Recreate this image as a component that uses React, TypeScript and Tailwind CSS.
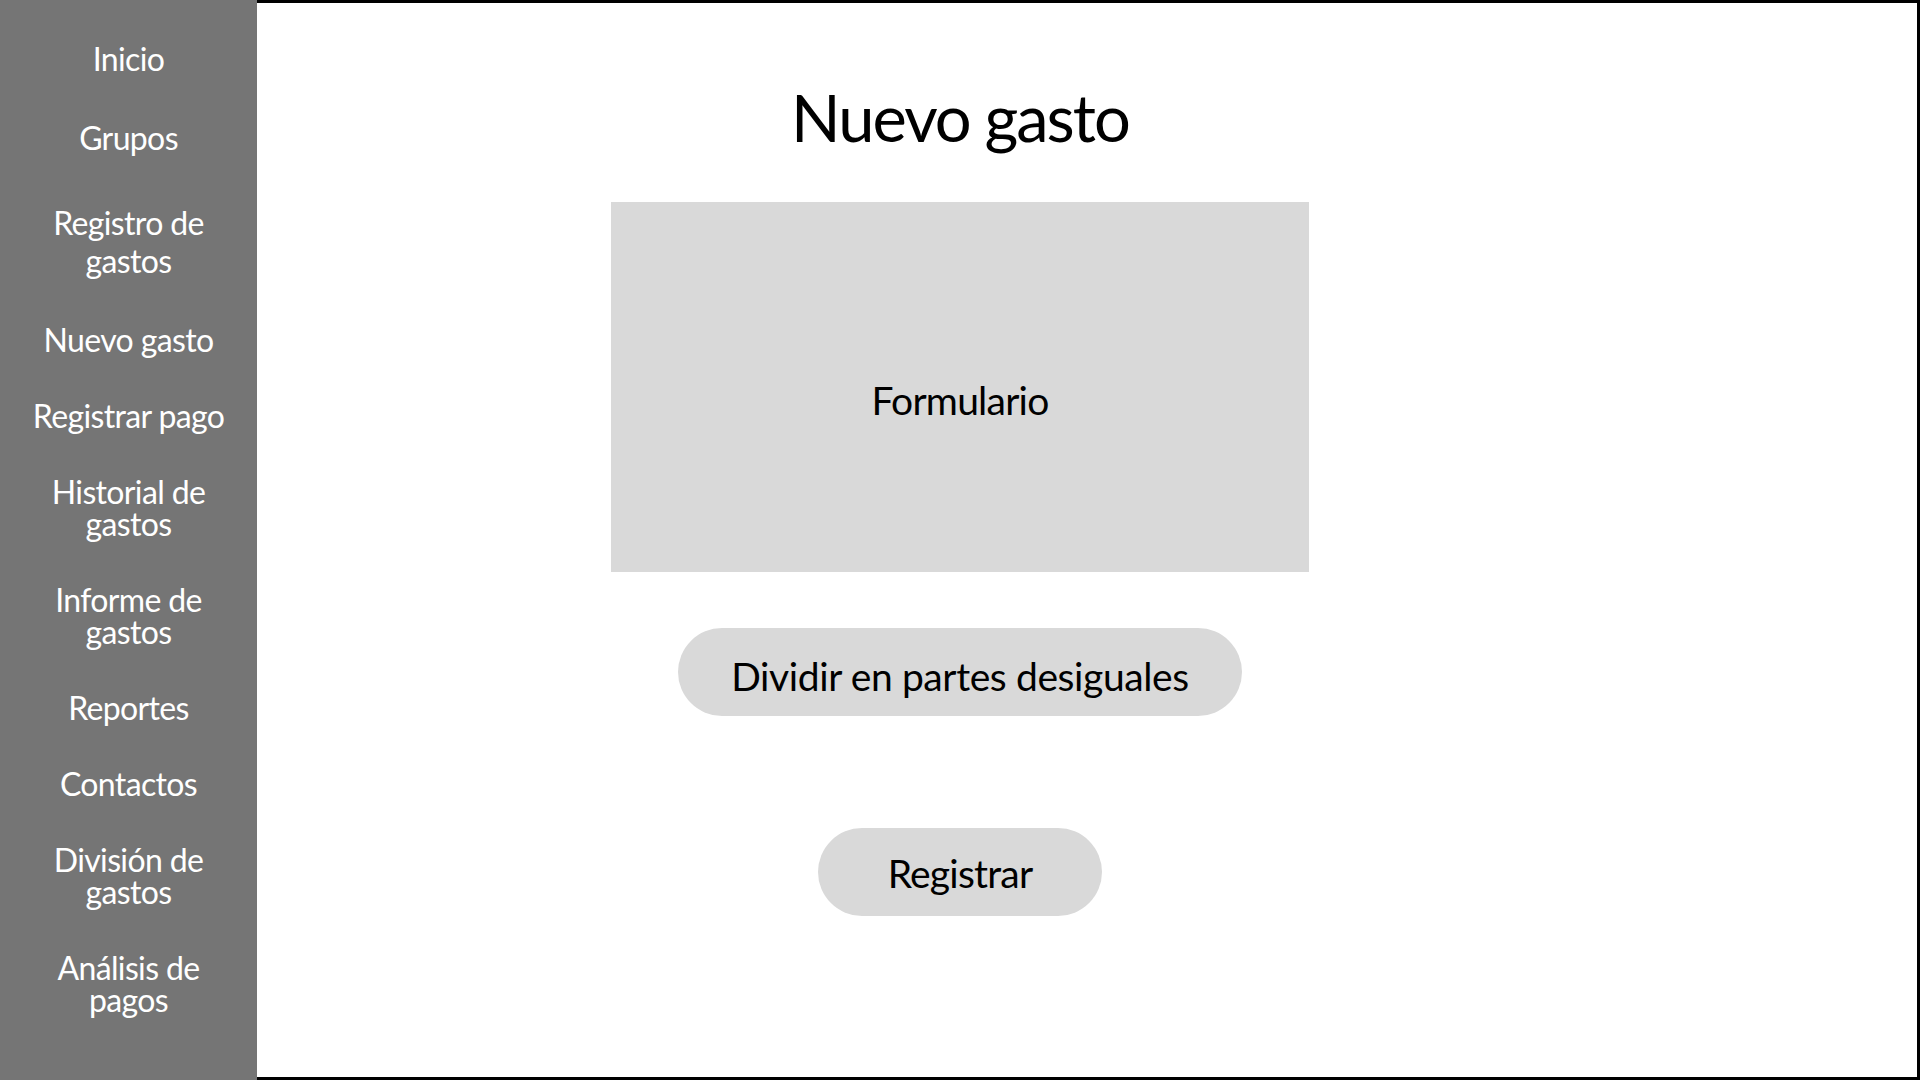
const navItems = [
  { label: "Inicio", extra: "" },
  { label: "Grupos", extra: "mt-[3px]" },
  { label: "Registro de gastos", extra: "mt-[6px] leading-[38px]" },
  { label: "Nuevo gasto", extra: "" },
  { label: "Registrar pago", extra: "" },
  { label: "Historial de gastos", extra: "" },
  { label: "Informe de gastos", extra: "" },
  { label: "Reportes", extra: "" },
  { label: "Contactos", extra: "" },
  { label: "División de gastos", extra: "" },
  { label: "Análisis de pagos", extra: "" },
];

export default function App() {
  return (
    <div className="flex h-[1080px] w-[1920px] overflow-hidden bg-white font-['Lato',sans-serif]">
      {/* Sidebar */}
      <nav className="flex w-[257px] shrink-0 flex-col items-center gap-[44px] bg-[#757575] pt-[43px] text-white">
        {navItems.map((item) => (
          <a
            key={item.label}
            href="#"
            className={`block w-[200px] text-center text-[32px] leading-[32px] tracking-[-0.02em] ${item.extra}`}
          >
            {item.label}
          </a>
        ))}
      </nav>

      {/* Main */}
      <main className="flex-1 border-y-[3px] border-r-[3px] border-black">
        <div className="ml-[354px] flex w-[698px] flex-col items-center">
          <h1 className="mt-[80px] text-[65px] leading-[68px] tracking-[-0.03em] text-black">Nuevo gasto</h1>

          <div className="mt-[51px] flex h-[370px] w-[698px] items-center justify-center bg-[#d9d9d9] pt-[26px]">
            <span className="text-[39px] tracking-[-0.02em] text-black">Formulario</span>
          </div>

          <button className="mt-[56px] h-[88px] w-[564px] rounded-full bg-[#d9d9d9] pt-[8px] text-[39px] tracking-[-0.01em] text-black">
            Dividir en partes desiguales
          </button>

          <button className="mt-[112px] h-[88px] w-[284px] rounded-full bg-[#d9d9d9] pt-[3px] text-[39px] tracking-[-0.02em] text-black">
            Registrar
          </button>
        </div>
      </main>
    </div>
  );
}
